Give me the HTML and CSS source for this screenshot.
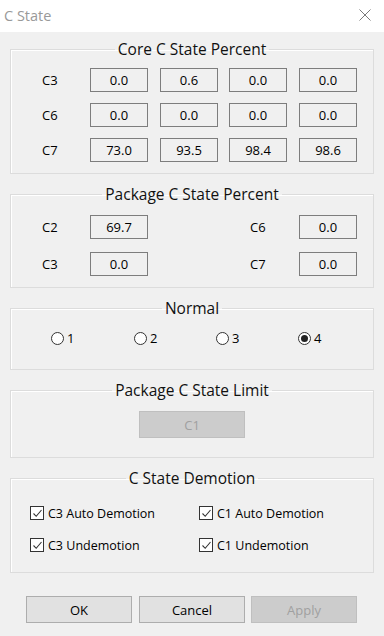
FILE: index.html
```html
<!DOCTYPE html>
<html lang="en">
  <head>
    <title>C State</title>
    <link rel="stylesheet" href="styles.css">
  </head>
  <body>
    <div id="window">
      <div id="titlebar">
        <span class="title">C State</span>
        <svg class="close" width="12" height="12" viewBox="0 0 12 12">
          <path d="M0.5 0.5 L11.5 11.5 M11.5 0.5 L0.5 11.5" stroke="#7a7a7a" stroke-width="1" fill="none" />
        </svg>
      </div>
      <div id="content">
        <!-- 코어 C State -->
        <fieldset class="group">
          <legend>Core C State Percent</legend>
          <div class="core_grid">
            <span class="lbl">C3</span>
            <span class="val">0.0</span>
            <span class="val">0.6</span>
            <span class="val">0.0</span>
            <span class="val">0.0</span>
            <span class="lbl">C6</span>
            <span class="val">0.0</span>
            <span class="val">0.0</span>
            <span class="val">0.0</span>
            <span class="val">0.0</span>
            <span class="lbl">C7</span>
            <span class="val">73.0</span>
            <span class="val">93.5</span>
            <span class="val">98.4</span>
            <span class="val">98.6</span>
          </div>
        </fieldset>

        <!-- 패키지 C State -->
        <fieldset class="group">
          <legend>Package C State Percent</legend>
          <div class="pkg_grid">
            <span class="lbl">C2</span>
            <span class="val">69.7</span>
            <span class="lbl">C6</span>
            <span class="val">0.0</span>
            <span class="lbl">C3</span>
            <span class="val">0.0</span>
            <span class="lbl">C7</span>
            <span class="val">0.0</span>
          </div>
        </fieldset>

        <fieldset class="group">
          <legend>Normal</legend>
          <div class="radios">
            <label class="radio"><span class="dot"></span>1</label>
            <label class="radio"><span class="dot"></span>2</label>
            <label class="radio"><span class="dot"></span>3</label>
            <label class="radio"><span class="dot on"></span>4</label>
          </div>
        </fieldset>

        <fieldset class="group">
          <legend>Package C State Limit</legend>
          <div class="limit">
            <button class="btn disabled">C1</button>
          </div>
        </fieldset>

        <fieldset class="group">
          <legend>C State Demotion</legend>
          <div class="checks">
            <label class="check"><span class="box"><svg width="11" height="11" viewBox="0 0 11 11"><path d="M1.5 5.5 L4.2 8.3 L9.5 2" stroke="#333" stroke-width="1.1" fill="none" /></svg></span>C3 Auto Demotion</label>
            <label class="check"><span class="box"><svg width="11" height="11" viewBox="0 0 11 11"><path d="M1.5 5.5 L4.2 8.3 L9.5 2" stroke="#333" stroke-width="1.1" fill="none" /></svg></span>C1 Auto Demotion</label>
            <label class="check"><span class="box"><svg width="11" height="11" viewBox="0 0 11 11"><path d="M1.5 5.5 L4.2 8.3 L9.5 2" stroke="#333" stroke-width="1.1" fill="none" /></svg></span>C3 Undemotion</label>
            <label class="check"><span class="box"><svg width="11" height="11" viewBox="0 0 11 11"><path d="M1.5 5.5 L4.2 8.3 L9.5 2" stroke="#333" stroke-width="1.1" fill="none" /></svg></span>C1 Undemotion</label>
          </div>
        </fieldset>

        <div class="buttons">
          <button class="btn ok">OK</button>
          <button class="btn">Cancel</button>
          <button class="btn disabled">Apply</button>
        </div>
      </div>
    </div>
  </body>
</html>
```

FILE: styles.css
```css
* {
  margin: 0;
  padding: 0;
  box-sizing: border-box;
}
body {
  width: 384px;
  height: 636px;
  background: #f0f0f0;
  font-family: "Open Sans", "Noto Sans", sans-serif;
  font-size: 12px;
  color: #000;
  overflow: hidden;
}
#titlebar {
  /* 상단 흰색 제목줄 */
  height: 32px;
  background: #fff;
  display: flex;
  align-items: center;
  justify-content: space-between;
  padding: 0 13px 2px 4px;
}
.title {
  font-size: 14.5px;
  color: #999;
}
#content {
  padding: 7px 10px 0;
}
.group {
  border: 1px solid #dcdcdc;
  box-shadow: inset 1px 1px 0 #fff;
  margin-bottom: 10px;
}
.group legend {
  margin: 0 auto;
  padding: 0 3px;
  font-size: 15.5px;
  line-height: 20px;
  color: #111;
}
.lbl {
  font-size: 13px;
}
.val {
  /* 값 표시 상자 */
  display: flex;
  align-items: center;
  justify-content: center;
  width: 58px;
  height: 24px;
  border: 1px solid #7d7d7d;
  font-size: 13px;
}
.core_grid {
  display: grid;
  grid-template-columns: 48px 70px 69px 70px 58px;
  row-gap: 11px;
  align-items: center;
  padding: 9px 0 11px 31px;
}
.pkg_grid {
  display: grid;
  grid-template-columns: 48px 160px 49px 58px;
  row-gap: 13px;
  align-items: center;
  padding: 11px 0 11px 31px;
}
.radios {
  display: grid;
  grid-template-columns: 83px 82px 82px 60px;
  padding: 10px 0 21px 40px;
}
.radio {
  display: flex;
  align-items: center;
  gap: 3px;
  height: 20px;
  font-size: 13px;
}
.dot {
  width: 13px;
  height: 13px;
  border: 1px solid #333;
  border-radius: 50%;
  background: #fff;
  display: flex;
  align-items: center;
  justify-content: center;
}
.dot.on::after {
  content: "";
  width: 7px;
  height: 7px;
  border-radius: 50%;
  background: #222;
}
.limit {
  display: flex;
  justify-content: center;
  padding: 11px 0 19px;
}
.btn {
  width: 106px;
  height: 27px;
  border: 1px solid #adadad;
  background: #e1e1e1;
  font-family: inherit;
  font-size: 13px;
  color: #000;
}
.btn.ok {
  margin-right: 1px;
}
.btn.disabled {
  background: #cccccc;
  border-color: #bfbfbf;
  color: #a0a0a0;
}
.checks {
  display: grid;
  grid-template-columns: 169px 150px;
  row-gap: 12px;
  padding: 15px 0 17px 19px;
}
.check {
  display: flex;
  align-items: center;
  gap: 4px;
  height: 20px;
  font-size: 12.5px;
}
.box {
  width: 14px;
  height: 14px;
  border: 1px solid #333;
  background: #fff;
  display: flex;
  align-items: center;
  justify-content: center;
}
.buttons {
  display: flex;
  justify-content: flex-end;
  gap: 6px;
  padding: 13px 17px 0 0;
}
```
